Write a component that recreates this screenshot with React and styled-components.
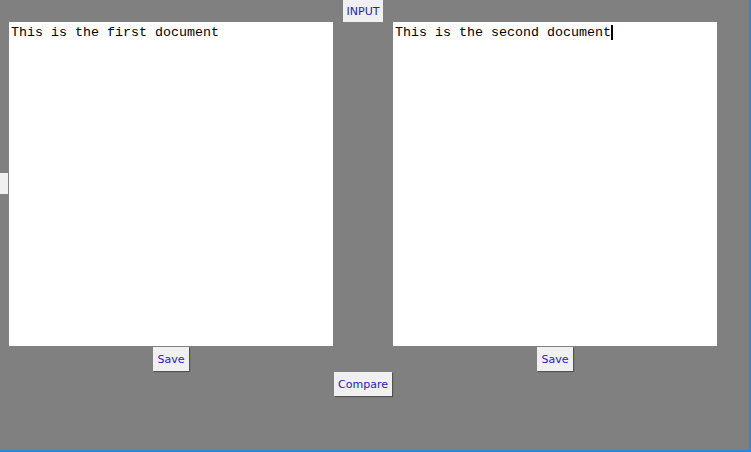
import React from "react";
import styled, { createGlobalStyle } from "styled-components";

const GlobalStyle = createGlobalStyle`
    html, body {
        margin: 0;
        padding: 0;
        background: #808080;
    }
`;

function App() {
    return (
        <Frame>
            <GlobalStyle />
            <Content>
                <Header>
                    <Button>INPUT</Button>
                </Header>
                <EditorsRow>
                    <SideTab />
                    <DocColumn>
                        <Editor>This is the first document</Editor>
                        <Button>Save</Button>
                    </DocColumn>
                    <DocColumn>
                        <Editor>
                            This is the second document
                            <Caret />
                        </Editor>
                        <Button>Save</Button>
                    </DocColumn>
                </EditorsRow>
                <Footer>
                    <Button>Compare</Button>
                </Footer>
            </Content>
        </Frame>
    );
}

export default App;

const Frame = styled.div`
    width: 751px;
    height: 452px;
    box-sizing: border-box;
    background: #808080;
    border-right: 2px solid #2f86d8;
    border-bottom: 2px solid #2f86d8;
    overflow: hidden;
`;
const Content = styled.div`
    width: 726px;
    display: flex;
    flex-direction: column;
`;
const Header = styled.div`
    display: flex;
    justify-content: center;
    height: 22px;
`;
const EditorsRow = styled.div`
    display: flex;
    align-items: flex-start;
`;
const SideTab = styled.span`
    display: block;
    width: 8px;
    height: 21px;
    margin-top: 151px;
    margin-right: 1px;
    background: #f0f0f0;
`;
const DocColumn = styled.div`
    display: flex;
    flex-direction: column;
    align-items: center;
    gap: 1px;
    & + & {
        margin-left: 60px;
    }
`;
const Editor = styled.div`
    width: 324px;
    height: 324px;
    box-sizing: border-box;
    background: #fff;
    padding: 3px 2px;
    font-family: "Liberation Mono", "Courier New", monospace;
    font-size: 13.33px;
    line-height: 15px;
    color: #000;
    white-space: pre-wrap;
`;
const Caret = styled.span`
    display: inline-block;
    width: 2px;
    height: 15px;
    background: #000;
    vertical-align: top;
`;
const Footer = styled.div`
    display: flex;
    justify-content: center;
    margin-top: 1px;
`;
const Button = styled.span`
    display: inline-flex;
    align-items: center;
    justify-content: center;
    height: 24px;
    padding: 0 4px;
    box-sizing: border-box;
    background: #f0f0f0;
    color: #1f1ac4;
    font-family: "DejaVu Sans", Tahoma, sans-serif;
    font-size: 11px;
    box-shadow: 1px 1px 1px rgba(0, 0, 0, 0.35);
    cursor: pointer;
    ${Header} & {
        height: 22px;
        box-shadow: none;
    }
`;
